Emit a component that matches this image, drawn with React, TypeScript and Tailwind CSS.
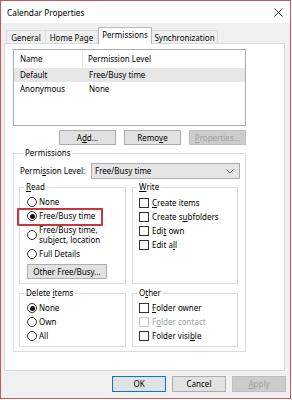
import React from "react";

const U = ({ children }: { children: React.ReactNode }) => (
  <span className="underline underline-offset-[1px] decoration-[0.5px]">{children}</span>
);

function Radio({ checked }: { checked?: boolean }) {
  return (
    <span className="w-[10px] h-[10px] rounded-full border border-[#333333] bg-white flex items-center justify-center shrink-0">
      {checked && <span className="w-[5px] h-[5px] rounded-full bg-[#111111]" />}
    </span>
  );
}

function Check({ disabled }: { disabled?: boolean }) {
  return (
    <span
      className={
        disabled
          ? "w-[10px] h-[10px] border border-[#c8c8c8] bg-white shrink-0"
          : "w-[10px] h-[10px] border border-[#333333] bg-white shrink-0"
      }
    />
  );
}

function RadioRow({ checked, children }: { checked?: boolean; children: React.ReactNode }) {
  return (
    <div className="h-[14px] flex items-center gap-[2px] pl-[7px]">
      <Radio checked={checked} />
      <span className="whitespace-nowrap">{children}</span>
    </div>
  );
}

function CheckRow({ disabled, children }: { disabled?: boolean; children: React.ReactNode }) {
  return (
    <div className="h-[14px] flex items-center gap-[3px] pl-[6px]">
      <Check disabled={disabled} />
      <span className={disabled ? "whitespace-nowrap text-[#a0a0a0]" : "whitespace-nowrap"}>{children}</span>
    </div>
  );
}

function Btn({ children, w, disabled, focused }: { children: React.ReactNode; w: string; disabled?: boolean; focused?: boolean }) {
  let cls = "h-[15px] flex items-center justify-center border ";
  if (disabled) cls += "bg-[#cccccc] border-[#bfbfbf] text-[#a0a0a0]";
  else if (focused) cls += "bg-[#e1e1e1] border-[#0078d7]";
  else cls += "bg-[#e1e1e1] border-[#adadad]";
  return <div className={cls + " " + w}>{children}</div>;
}

export default function App() {
  return (
    <div className="w-[292px] h-[400px] bg-white text-[8px] leading-[12px] text-black font-['Noto_Sans',sans-serif]">
      <div className="w-[291px] h-[399px] border border-[#c8595d] bg-[#f0f0f0] flex flex-col">
        {/* Title bar */}
        <div className="h-[22px] bg-white flex items-center justify-between pl-[6px] pr-[6px] pt-[1px] shrink-0">
          <span className="text-[8.3px]">Calendar Properties</span>
          <svg width="9" height="9" viewBox="0 0 9 9" className="mr-[1px]">
            <path d="M0.5 0.5 L8.5 8.5 M8.5 0.5 L0.5 8.5" stroke="#222" strokeWidth="0.9" fill="none" />
          </svg>
        </div>
        {/* Body */}
        <div className="flex flex-col px-[3px]">
          {/* Tabs */}
          <div className="h-[21px] flex items-end pl-[2px] relative z-10 -mb-px">
            <div className="w-[40px] h-[14px] flex items-center justify-center border border-b-0 border-[#d9d9d9]">General</div>
            <div className="w-[52px] h-[14px] flex items-center justify-center border border-b-0 border-l-0 border-[#d9d9d9]">Home Page</div>
            <div className="w-[54px] h-[17px] flex items-center justify-center border border-b-0 border-[#b9b9b9] bg-white pb-[2px]">Permissions</div>
            <div className="w-[66px] h-[14px] flex items-center justify-center border border-b-0 border-l-0 border-[#d9d9d9]">Synchronization</div>
          </div>
          {/* Panel */}
          <div className="w-[281px] h-[328px] border border-[#d9d9d9] bg-white pl-[8px] pt-[5px] flex flex-col">
            {/* List */}
            <div className="w-[233px] h-[77px] border border-[#ababab] flex flex-col shrink-0">
              <div className="h-[18px] flex items-center">
                <div className="w-[69px] h-full flex items-center pl-[6px] border-r border-[#e5e5e5]">Name</div>
                <div className="pl-[5px]">Permission Level</div>
              </div>
              <div className="h-[14px] flex items-center bg-[#e6e6e6]">
                <div className="w-[69px] pl-[6px]">Default</div>
                <div className="pl-[6px]">Free/Busy time</div>
              </div>
              <div className="h-[14px] flex items-center">
                <div className="w-[69px] pl-[6px]">Anonymous</div>
                <div className="pl-[6px]">None</div>
              </div>
            </div>
            {/* Buttons */}
            <div className="w-[233px] mt-[4px] flex justify-end gap-[8px] shrink-0">
              <Btn w="w-[57px]">
                A<U>d</U>d...
              </Btn>
              <Btn w="w-[57px]">
                Remo<U>v</U>e
              </Btn>
              <Btn w="w-[57px]" disabled>
                <U>P</U>roperties...
              </Btn>
            </div>
            {/* Permissions group */}
            <fieldset className="w-[233px] mt-[2px] border border-[#dcdcdc] pl-[5px] pb-[4px] shrink-0">
              <legend className="ml-[4px] px-[2px] leading-[12px]">Permissions</legend>
              <div className="mt-[4px] h-[16px] flex items-center">
                <span className="ml-[1px]">
                  Permi<U>s</U>sion Level:
                </span>
                <div className="ml-auto mr-[5px] w-[149px] h-[16px] bg-[#e5e5e5] border border-[#acacac] flex items-center justify-between pl-[3px] pr-[5px]">
                  <span>Free/Busy time</span>
                  <svg width="8" height="5" viewBox="0 0 8 5">
                    <path d="M0.5 0.5 L4 4 L7.5 0.5" stroke="#444" strokeWidth="0.9" fill="none" />
                  </svg>
                </div>
              </div>
              {/* Read / Write */}
              <div className="mt-[2px] flex gap-[6px]">
                <fieldset className="w-[107px] border border-[#dcdcdc] pt-[2px] pb-[4px]">
                  <legend className="ml-[4px] px-[2px] leading-[12px]">
                    <U>R</U>ead
                  </legend>
                  <RadioRow>None</RadioRow>
                  <div className="relative">
                    <RadioRow checked>Free/Busy time</RadioRow>
                    <div className="absolute -left-[3px] -top-[1px] w-[86px] h-[18px] border-2 border-[#c7363d] rounded-[1px]" />
                  </div>
                  <div className="h-[24px] flex items-center gap-[2px] pl-[7px]">
                    <Radio />
                    <div className="leading-[10px] whitespace-nowrap">
                      Free/Busy time,
                      <br />
                      subject, location
                    </div>
                  </div>
                  <RadioRow>Full Details</RadioRow>
                  <div className="mt-[3px] ml-[7px] w-[80px] h-[15px] bg-[#e1e1e1] border border-[#adadad] flex items-center justify-center">
                    Other Free/Busy...
                  </div>
                </fieldset>
                <fieldset className="w-[106px] border border-[#dcdcdc] pt-[3px]">
                  <legend className="ml-[4px] px-[2px] leading-[12px]">
                    <U>W</U>rite
                  </legend>
                  <CheckRow>
                    <U>C</U>reate items
                  </CheckRow>
                  <CheckRow>
                    Create s<U>u</U>bfolders
                  </CheckRow>
                  <CheckRow>
                    Edi<U>t</U> own
                  </CheckRow>
                  <CheckRow>
                    Edit a<U>l</U>l
                  </CheckRow>
                </fieldset>
              </div>
              {/* Delete / Other */}
              <div className="mt-[3px] flex gap-[6px]">
                <fieldset className="w-[107px] border border-[#dcdcdc] pt-[2px] pb-[3px]">
                  <legend className="ml-[4px] px-[2px] leading-[12px]">
                    Delete <U>i</U>tems
                  </legend>
                  <RadioRow checked>None</RadioRow>
                  <RadioRow>Own</RadioRow>
                  <RadioRow>All</RadioRow>
                </fieldset>
                <fieldset className="w-[106px] border border-[#dcdcdc] pt-[2px] pb-[3px]">
                  <legend className="ml-[4px] px-[2px] leading-[12px]">
                    O<U>t</U>her
                  </legend>
                  <CheckRow>
                    <U>F</U>older owner
                  </CheckRow>
                  <CheckRow disabled>
                    F<U>o</U>lder contact
                  </CheckRow>
                  <CheckRow>
                    Folder visi<U>b</U>le
                  </CheckRow>
                </fieldset>
              </div>
            </fieldset>
          </div>
          {/* Dialog buttons */}
          <div className="mt-[5px] mr-[1px] flex justify-end gap-[6px]">
            <div className="w-[54px] h-[16px] flex items-center justify-center bg-[#e1e1e1] border border-[#0078d7]">OK</div>
            <div className="w-[54px] h-[16px] flex items-center justify-center bg-[#e1e1e1] border border-[#adadad]">Cancel</div>
            <div className="w-[54px] h-[16px] flex items-center justify-center bg-[#cccccc] border border-[#bfbfbf] text-[#a0a0a0]">
              <U>A</U>pply
            </div>
          </div>
        </div>
      </div>
    </div>
  );
}
